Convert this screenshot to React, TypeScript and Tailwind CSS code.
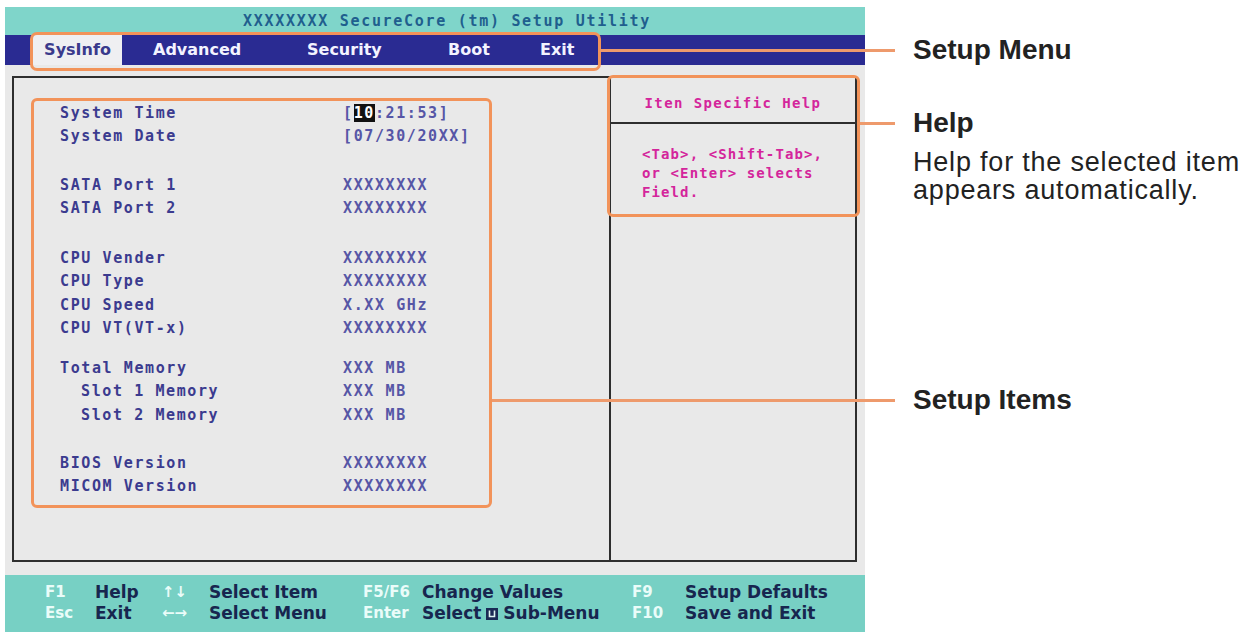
import React from 'react';

type Row = { label: string; value: React.ReactNode; indent?: boolean };

const MONO = "font-['DejaVu_Sans_Mono',monospace] font-bold";
const SANS = "font-['DejaVu_Sans',sans-serif] font-bold";

// system info rows, grouped the way the setup screen spaces them
const GROUPS: { gap: string; rows: Row[] }[] = [
    {
        gap: 'mt-0',
        rows: [
            {
                label: 'System Time',
                value: (
                    <>
                        [<span className="bg-[#111] text-white">10</span>:21:53]
                    </>
                ),
            },
            { label: 'System Date', value: '[07/30/20XX]' },
        ],
    },
    {
        gap: 'mt-[25px]',
        rows: [
            { label: 'SATA Port 1', value: 'XXXXXXXX' },
            { label: 'SATA Port 2', value: 'XXXXXXXX' },
        ],
    },
    {
        gap: 'mt-[26px]',
        rows: [
            { label: 'CPU Vender', value: 'XXXXXXXX' },
            { label: 'CPU Type', value: 'XXXXXXXX' },
            { label: 'CPU Speed', value: 'X.XX GHz' },
            { label: 'CPU VT(VT-x)', value: 'XXXXXXXX' },
        ],
    },
    {
        gap: 'mt-[16px]',
        rows: [
            { label: 'Total Memory', value: 'XXX MB' },
            { label: 'Slot 1 Memory', value: 'XXX MB', indent: true },
            { label: 'Slot 2 Memory', value: 'XXX MB', indent: true },
        ],
    },
    {
        gap: 'mt-[24.5px]',
        rows: [
            { label: 'BIOS Version', value: 'XXXXXXXX' },
            { label: 'MICOM Version', value: 'XXXXXXXX' },
        ],
    },
];

const MENU = [
    { name: 'Advanced', cls: 'w-[168px] pl-[31px]' },
    { name: 'Security', cls: 'w-[140px] pl-[17px]' },
    { name: 'Boot', cls: 'w-[109px] pl-[18px]' },
    { name: 'Exit', cls: 'w-[60px] pl-[1px]' },
];

const SubMenuGlyph = () => (
    <svg width="12" height="12" viewBox="0 0 12 12" className="inline-block mx-[5px] align-[-1px]">
        <rect x="0" y="0" width="12" height="12" fill="#1a2a55" />
        <path d="M3.5 2.5v6h5v-6" stroke="#dff4f1" strokeWidth="1.6" fill="none" />
    </svg>
);

const Key = ({ children }: { children: React.ReactNode }) => (
    <div className="text-[15px] text-[#eafcf9]">{children}</div>
);
const Label = ({ children }: { children: React.ReactNode }) => (
    <div className="text-[#17264f]">{children}</div>
);

const App: React.FC = () => {
    return (
        <div className="relative w-[1250px] h-[632px] bg-white overflow-hidden flex items-start">
            {/* BIOS screen */}
            <div className="shrink-0 ml-[5px] mt-[7px] w-[860px] h-[625px] flex flex-col">
                <div className={`h-[28px] bg-[#7fd5ca] flex items-center justify-center pl-[24px] text-[15px] tracking-[1.7px] text-[#1f5f8e] ${MONO}`}>
                    XXXXXXXX SecureCore (tm) Setup Utility
                </div>

                <div className={`h-[30px] bg-[#2a2b92] flex items-center text-[16px] text-[#f3f3ff] ${SANS}`}>
                    <div className="ml-[28px] w-[89px] h-full bg-[#efeff2] text-[#3a3a8c] flex items-center justify-center">
                        SysInfo
                    </div>
                    {MENU.map((m) => (
                        <div key={m.name} className={m.cls}>
                            {m.name}
                        </div>
                    ))}
                </div>

                <div className="h-[510px] bg-[#e9e9e9] pl-[7px] pr-[8px] pt-[11px] pb-[13px]">
                    <div className="h-full border-2 border-[#2e2e2e] flex">
                        {/* setup items */}
                        <div className="w-[595px] pl-[17px] pt-[20px]">
                            <div className={`w-[461px] h-[410px] border-[3px] border-[#f2935a] rounded-[6px] pl-[26px] text-[15px] tracking-[1.6px] ${MONO}`}>
                                {GROUPS.map((g, gi) => (
                                    <div key={gi} className={g.gap}>
                                        {g.rows.map((r) => (
                                            <div key={r.label} className="grid grid-cols-[283px_1fr] h-[23.5px] items-center">
                                                <div className={`text-[#3b3b8f] ${r.indent ? 'pl-[21px]' : ''}`}>{r.label}</div>
                                                <div className="text-[#5656a6]">{r.value}</div>
                                            </div>
                                        ))}
                                    </div>
                                ))}
                            </div>
                        </div>

                        {/* item specific help */}
                        <div className="relative flex-1 border-l-2 border-[#2e2e2e]">
                            <div className={`h-[46px] border-b-2 border-[#2e2e2e] flex items-center justify-center pt-[6px] text-[14px] tracking-[1.4px] text-[#d4259b] ${MONO}`}>
                                Iten Specific Help
                            </div>
                            <div className={`pl-[31px] pt-[21px] text-[14px] tracking-[1.1px] leading-[19px] text-[#d4259b] ${MONO}`}>
                                <div>&lt;Tab&gt;, &lt;Shift-Tab&gt;,</div>
                                <div>or &lt;Enter&gt; selects</div>
                                <div>Field.</div>
                            </div>
                            <div className="absolute left-[-4px] right-[-5px] top-[-3px] h-[142px] border-[3px] border-[#f2935a] rounded-[6px] pointer-events-none" />
                        </div>
                    </div>
                </div>

                <div className={`flex-1 bg-[#77d0c4] pl-[40px] pt-[7px] text-[17px] leading-[21px] ${SANS}`}>
                    <div className="grid grid-cols-[50px_67px_47px_154px_59px_210px_53px_1fr]">
                        <Key>F1</Key>
                        <Label>Help</Label>
                        <Key>↑↓</Key>
                        <Label>Select Item</Label>
                        <Key>F5/F6</Key>
                        <Label>Change Values</Label>
                        <Key>F9</Key>
                        <Label>Setup Defaults</Label>

                        <Key>Esc</Key>
                        <Label>Exit</Label>
                        <Key>←→</Key>
                        <Label>Select Menu</Label>
                        <Key>Enter</Key>
                        <Label>
                            Select<SubMenuGlyph />Sub-Menu
                        </Label>
                        <Key>F10</Key>
                        <Label>Save and Exit</Label>
                    </div>
                </div>
            </div>

            {/* callouts */}
            <div className="shrink-0 ml-[48px] mt-[34px] flex flex-col text-[#222] font-['Liberation_Sans',Arial,sans-serif]">
                <div className="text-[28px] leading-[32px] font-bold">Setup Menu</div>
                <div className="mt-[41px] text-[28px] leading-[32px] font-bold">Help</div>
                <div className="mt-[9px] text-[27px] leading-[28px] tracking-[0.8px] whitespace-nowrap">
                    <div>Help for the selected item</div>
                    <div>appears automatically.</div>
                </div>
                <div className="mt-[180px] text-[28px] leading-[32px] font-bold">Setup Items</div>
            </div>

            {/* highlight around the menu bar and leader lines */}
            <div className="absolute left-[30px] top-[32px] w-[571px] h-[39px] border-[3px] border-[#f2935a] rounded-[7px] pointer-events-none" />
            <div className="absolute left-[600px] top-[49px] w-[295px] h-[3px] bg-[#ee9a6c]" />
            <div className="absolute left-[860px] top-[122px] w-[35px] h-[3px] bg-[#ee9a6c]" />
            <div className="absolute left-[492px] top-[399px] w-[403px] h-[3px] bg-[#ee9a6c]" />
        </div>
    );
};

export default App;
